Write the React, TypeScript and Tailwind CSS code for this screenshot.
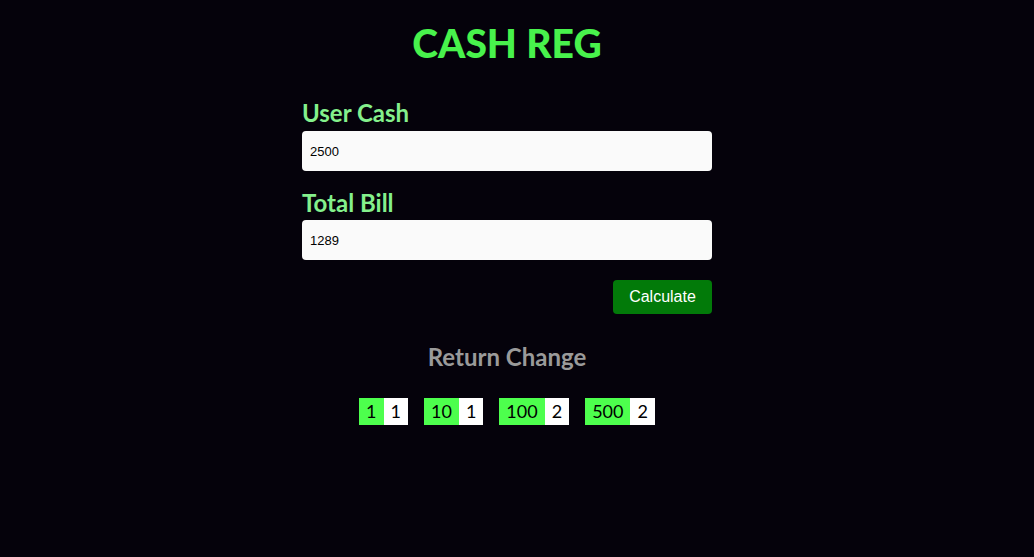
import React from "react";

const chips = [
  { note: "1", count: 1 },
  { note: "10", count: 1 },
  { note: "100", count: 2 },
  { note: "500", count: 2 },
];

export default function App() {
  return (
    <div className="min-h-[557px] w-full bg-[#05020b] pr-[20px] [font-family:Lato,'Open_Sans',sans-serif]">
      <div className="flex flex-col items-center">
        <h1 className="mt-[19px] text-[39px] leading-[48px] font-black text-[#48f24c]">
          CASH REG
        </h1>
        <div className="mt-[32px] flex w-[410px] flex-col">
          <label className="text-[24px] leading-[28px] font-bold text-[#84f08c]">User Cash</label>
          <input
            readOnly
            value="2500"
            className="mt-[4px] h-[40px] w-full rounded-[4px] bg-[#fafafa] px-[8px] text-[13px] text-black outline-none [font-family:'Liberation_Sans',Arial,sans-serif]"
          />
          <label className="mt-[18px] text-[24px] leading-[28px] font-bold text-[#84f08c]">Total Bill</label>
          <input
            readOnly
            value="1289"
            className="mt-[3px] h-[40px] w-full rounded-[4px] bg-[#fafafa] px-[8px] text-[13px] text-black outline-none [font-family:'Liberation_Sans',Arial,sans-serif]"
          />
          <div className="mt-[20px] flex justify-end">
            <button className="h-[34px] w-[99px] rounded-[4px] bg-[#027a09] text-[16px] text-white [font-family:'Liberation_Sans',Arial,sans-serif]">
              Calculate
            </button>
          </div>
        </div>
        <h2 className="mt-[28px] text-[24px] leading-[30px] font-bold text-[#9a9a9a]">Return Change</h2>
        <div className="mt-[26px] flex gap-[16px]">
          {chips.map((c) => (
            <div key={c.note} className="flex h-[27px] text-[18px] leading-[27px] text-black">
              <span className="bg-[#4dff4d] px-[7px]">{c.note}</span>
              <span className="bg-white px-[7px]">{c.count}</span>
            </div>
          ))}
        </div>
      </div>
    </div>
  );
}
